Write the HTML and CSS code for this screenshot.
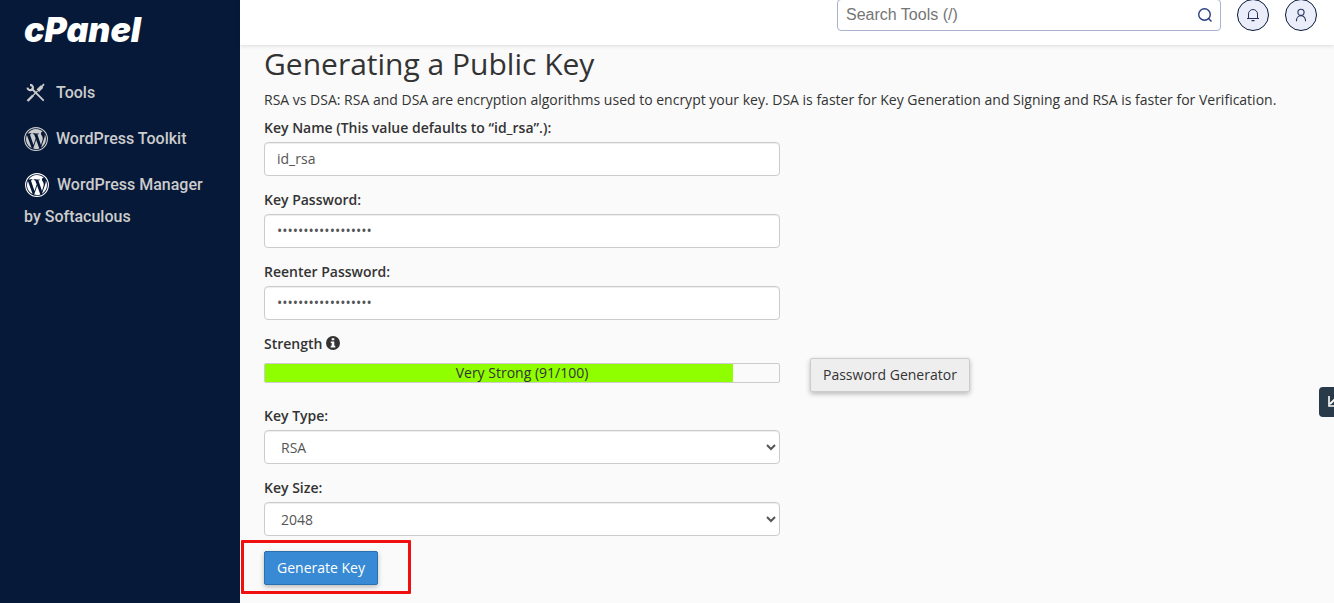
FILE: index.html
```html
<!DOCTYPE html>
<html lang="en">
<head>
  <meta charset="UTF-8">
  <meta name="viewport" content="width=device-width, initial-scale=1.0">
  <title>cPanel - SSH Access</title>
  <link rel="stylesheet" href="styles.css">
</head>
<body>
  <svg class="sprite" aria-hidden="true">
    <symbol id="wordpress" viewBox="0 0 24 24">
      <circle cx="12" cy="12" r="11.4" fill="none" stroke="currentColor" stroke-width="1.1"/>
      <path transform="translate(.9 .9) scale(.925)" fill="currentColor" d="M21.469 6.825c.84 1.537 1.318 3.3 1.318 5.175 0 3.979-2.156 7.456-5.363 9.325l3.295-9.527c.615-1.54.82-2.771.82-3.864 0-.405-.026-.78-.07-1.11m-7.981.105c.647-.03 1.232-.105 1.232-.105.582-.075.514-.93-.067-.899 0 0-1.755.135-2.88.135-1.064 0-2.85-.15-2.85-.15-.585-.03-.661.855-.075.885 0 0 .54.061 1.125.09l1.68 4.605-2.37 7.08L5.354 6.9c.649-.03 1.234-.1 1.234-.1.585-.075.516-.93-.065-.896 0 0-1.746.138-2.874.138-.2 0-.438-.008-.69-.015C4.911 3.15 8.235 1.215 12 1.215c2.809 0 5.365 1.072 7.286 2.833-.046-.003-.091-.009-.141-.009-1.06 0-1.812.923-1.812 1.914 0 .89.513 1.643 1.06 2.531.411.72.89 1.643.89 2.977 0 .915-.354 1.994-.821 3.479l-1.075 3.585-3.9-11.61zM12 22.784c-1.059 0-2.081-.153-3.048-.437l3.237-9.406 3.315 9.087c.024.053.05.101.078.149-1.12.393-2.325.609-3.582.609M1.211 12c0-1.564.336-3.05.935-4.39L7.29 21.709C3.694 19.96 1.212 16.271 1.211 12"/>
    </symbol>
  </svg>

  <aside class="sidebar">
    <a class="logo" href="#">cPanel</a>
    <nav class="menu">
      <a href="#"><svg class="menu-icon" viewBox="0 0 24 24" fill="none" stroke="currentColor"><path stroke-width="1.8" stroke-linecap="round" d="M8 8l11.200 11.200"/><path stroke-width="2.400" d="M3.500 20l5.500-5.500"/><path stroke-width="1.300" d="M8.500 15l5-5"/><path stroke-width="3.600" d="M13.800 9.700l4.200-4.200"/><path stroke-width="1.800" d="M17 6.500l3-3.400"/><path stroke-width="2.200" d="M6 3.800A3 3 0 0 1 8.400 8.600 3.200 3.200 0 0 1 3.400 6.600"/></svg>Tools</a>
      <a href="#"><svg class="menu-icon"><use href="#wordpress"/></svg>WordPress Toolkit</a>
      <a href="#"><svg class="menu-icon manager"><use href="#wordpress"/></svg>WordPress Manager by Softaculous</a>
    </nav>
  </aside>

  <div class="page">
    <header class="topbar">
      <div class="search">
        <input type="text" aria-label="Search Tools" placeholder="Search Tools (/)">
        <button type="button" aria-label="Search">
          <svg width="16" height="16" viewBox="0 0 16 16" fill="none" stroke="#293f7d" stroke-width="1.400"><circle cx="7.500" cy="7.500" r="5.800"/><path d="M11.500 11.500l3 3"/></svg>
        </button>
      </div>
      <button class="round" type="button" aria-label="Notifications">
        <svg width="16" height="16" viewBox="0 0 16 16" fill="none" stroke="#26345c"><path d="M3.500 11.500V7a4.500 4.500 0 0 1 9 0v4.500"/><path stroke-width="1.200" d="M2 11.500h12M6.500 13.700h3"/></svg>
      </button>
      <button class="round" type="button" aria-label="Account">
        <svg width="16" height="16" viewBox="0 0 16 16" fill="none" stroke="#26345c" stroke-width="1.100"><circle cx="8" cy="5.300" r="3.100"/><path d="M3.500 14.200v-1a4.500 4.500 0 0 1 9 0v1"/></svg>
      </button>
    </header>

    <main class="content">
      <h1>Generating a Public Key</h1>
      <p>RSA vs DSA: RSA and DSA are encryption algorithms used to encrypt your key. DSA is faster for Key Generation and Signing and RSA is faster for Verification.</p>
      <form>
        <div class="form-group">
          <label for="keyName">Key Name (This value defaults to “id_rsa”.):</label>
          <input class="form-control" type="text" id="keyName" value="id_rsa">
        </div>
        <div class="form-group">
          <label for="password">Key Password:</label>
          <input class="form-control" type="password" id="password" value="abcdefghijklmnopqr">
        </div>
        <div class="form-group">
          <label for="password2">Reenter Password:</label>
          <input class="form-control" type="password" id="password2" value="abcdefghijklmnopqr">
        </div>
        <div class="form-group">
          <div class="label">Strength
            <svg class="info" width="14" height="14" viewBox="0 0 14 14"><circle cx="7" cy="7" r="7" fill="#333"/><path fill="#fafafa" d="M5.700 2.200h2.600v2H5.700zM4.700 5.400h3.600v4.400h1v1.700H4.700V9.800h1V7h-1z"/></svg>
          </div>
          <div class="strength-row">
            <div class="strength">
              <div class="strength-bar" style="width: 91%"></div>
              <span>Very Strong (91/100)</span>
            </div>
            <button class="btn" type="button">Password Generator</button>
          </div>
        </div>
        <div class="form-group">
          <label for="keyType">Key Type:</label>
          <select class="form-control" id="keyType">
            <option>RSA</option>
            <option>DSA</option>
          </select>
        </div>
        <div class="form-group">
          <label for="keySize">Key Size:</label>
          <select class="form-control" id="keySize">
            <option>2048</option>
            <option>4096</option>
          </select>
        </div>
        <div class="submit">
          <button class="btn btn-primary" type="button">Generate Key</button>
        </div>
      </form>
    </main>
  </div>

  <button class="side-tab" type="button" aria-label="Statistics">
    <svg width="16" height="16" viewBox="0 0 16 16" fill="none" stroke="#fff" stroke-width="1.600"><path d="M3 2v10h12"/><path stroke-width="1.800" d="M4 10l5-5 3 3 4-5"/></svg>
  </button>
</body>
</html>
```
FILE: styles.css
```css
* {
  box-sizing: border-box;
}
body {
  margin: 0;
  min-height: 100vh;
  display: flex;
  font-family: "Open Sans", sans-serif;
  font-size: 14px;
  line-height: 20px;
  color: #333;
  background: #fafafa;
  overflow: hidden;
}
.sprite {
  display: none;
}

/* sidebar */
.sidebar {
  flex: 0 0 240px;
  padding: 10px 24px;
  background: #061938;
  font-family: Roboto, sans-serif;
}
.logo {
  display: block;
  font-family: Inter, sans-serif;
  font-size: 34px;
  font-weight: 900;
  font-style: italic;
  line-height: 40px;
  color: #fff;
  text-decoration: none;
}
.menu {
  display: flex;
  flex-direction: column;
  gap: 14px;
  margin-top: 27px;
}
.menu a {
  font-size: 16px;
  font-weight: 500;
  line-height: 32px;
  color: #ccc;
  text-decoration: none;
}
.menu-icon {
  width: 24px;
  height: 24px;
  margin: -2px 8px 0 0;
  vertical-align: middle;
}
.menu-icon.manager {
  margin-left: 1px;
  color: #fff;
}

/* top bar */
.page {
  flex: 1;
  min-width: 0;
}
.topbar {
  display: flex;
  justify-content: flex-end;
  align-items: flex-end;
  gap: 16px;
  height: 45px;
  padding: 0 17px 14px;
  background: #fff;
  box-shadow: 0 1px 4px rgba(0, 0, 0, 0.12);
}
.search {
  display: flex;
  width: 384px;
  height: 32px;
  border: 1px solid #a9b2d0;
  border-radius: 4px;
  background: #fff;
}
.search input {
  flex: 1;
  min-width: 0;
  padding: 0 8px;
  border: 0;
  background: none;
  font-family: "Liberation Sans", Arial, sans-serif;
  font-size: 16px;
}
.search button {
  display: flex;
  align-items: center;
  justify-content: center;
  width: 30px;
  padding: 0;
  border: 0;
  background: none;
}
.round {
  display: flex;
  align-items: center;
  justify-content: center;
  width: 32px;
  height: 32px;
  padding: 0;
  border: 1px solid #061938;
  border-radius: 50%;
  background: #ebedfa;
}

/* form */
.content {
  padding: 2px 24px 18px;
}
h1 {
  margin: 0 0 10px;
  font-size: 30px;
  font-weight: 400;
  line-height: 33px;
}
p {
  margin: 0 0 8px;
}
.form-group {
  margin-bottom: 14px;
}
label,
.label {
  display: block;
  margin-bottom: 4px;
  font-weight: 600;
}
.info {
  vertical-align: -1px;
}
.form-control {
  display: block;
  width: 100%;
  max-width: 516px;
  height: 34px;
  padding: 6px 12px;
  border: 1px solid #ccc;
  border-radius: 4px;
  background-color: #fff;
  box-shadow: inset 0 1px 1px rgba(0, 0, 0, 0.075);
  font: inherit;
  color: #555;
}
input.form-control {
  padding: 5px 12px 7px;
}
.strength-row {
  display: flex;
  align-items: flex-start;
  gap: 30px;
}
.strength {
  display: grid;
  flex: 0 1 516px;
  height: 20px;
  margin-top: 5px;
  border: 1px solid #ccc;
  border-radius: 2px;
  line-height: 18px;
  text-align: center;
}
.strength-bar,
.strength span {
  grid-area: 1 / 1;
}
.strength-bar {
  background: #8fff00;
}
.btn {
  height: 34px;
  padding: 6px 12px;
  border: 1px solid #ccc;
  border-radius: 2px;
  background: #eee;
  box-shadow: 0 2px 5px rgba(0, 0, 0, 0.26);
  font: inherit;
  color: #333;
}
.btn-primary {
  border-color: #2a70b0;
  background: #378ad3;
  color: #fff;
}
.submit {
  position: relative;
  width: fit-content;
  margin-top: 15px;
}
.submit::after {
  content: "";
  position: absolute;
  inset: -11px -33px -9px -23px;
  border: 3px solid #f01010;
  border-radius: 1px;
  pointer-events: none;
}

.side-tab {
  position: fixed;
  top: 387px;
  right: -15px;
  width: 30px;
  height: 30px;
  padding: 7px;
  border: 0;
  border-radius: 4px;
  background: #293b4b;
}
.side-tab svg {
  display: block;
}
```
